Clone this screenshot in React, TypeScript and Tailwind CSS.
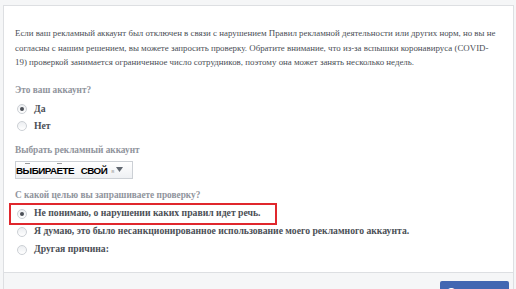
import React from 'react';

function Radio({ checked }: { checked?: boolean }) {
  return (
    <span className="flex h-[10px] w-[10px] shrink-0 items-center justify-center rounded-full border border-[#ccd0d5] bg-gradient-to-b from-[#eceef1] to-white">
      {checked && <span className="h-[4px] w-[4px] rounded-full bg-[#4b4f56]" />}
    </span>
  );
}

function Option({ label, checked, tall }: { label: string; checked?: boolean; tall?: boolean }) {
  return (
    <div className={`flex items-center gap-[7px] pl-[1px] ${tall ? 'h-[18px]' : 'h-[17px]'}`}>
      <Radio checked={checked} />
      <span className="text-[9.7px] font-bold whitespace-nowrap text-[#4b4f56]">{label}</span>
    </div>
  );
}

export default function App() {
  return (
    <div className="flex h-[289px] w-[516px] flex-col overflow-hidden bg-[#f5f6f7] pt-[5px] font-[family-name:Liberation_Serif]">
      <div className="ml-[3px] mr-[2px] flex-1 border-x border-t border-[#dddfe2] bg-white pl-[11px] pt-[20px]">
        <p className="text-[8.9px] leading-[14.5px] whitespace-nowrap text-[#4b4f56]">
          Если ваш рекламный аккаунт был отключен в связи с нарушением Правил рекламной деятельности или других норм, но вы не
          <br />
          согласны с нашим решением, вы можете запросить проверку. Обратите внимание, что из-за вспышки коронавируса (COVID-
          <br />
          19) проверкой занимается ограниченное число сотрудников, поэтому она может занять несколько недель.
        </p>

        <div className="mt-[13px] text-[9.3px] leading-[14px] font-bold text-[#90949c]">Это ваш аккаунт?</div>
        <div className="mt-[4px] flex flex-col pl-[1px]">
          <Option label="Да" checked />
          <Option label="Нет" />
        </div>

        <div className="mt-[8px] text-[9.3px] leading-[14px] font-bold text-[#90949c]">Выбрать рекламный аккаунт</div>
        <div className="relative mt-[4px] flex h-[18px] w-[118px] items-center overflow-hidden border border-[#ccd0d5] bg-gradient-to-b from-white to-[#eef0f3] pt-[3px] font-[family-name:Liberation_Sans]">
          <span className="absolute left-[9px] top-[1px] h-px w-[5px] bg-[#999]" />
          <span className="absolute left-[41px] top-[1px] h-px w-[5px] bg-[#999]" />
          <span className="text-[9.8px] leading-[12px] font-bold tracking-[-0.5px] whitespace-nowrap text-black">
            ВЫБИРАЕТЕ&nbsp;&nbsp;&nbsp;СВОЙ
          </span>
          <span className="ml-[4px] text-[6px] text-[#aaa]">в</span>
          <svg className="ml-[2px] -mt-[3px]" width="7" height="5" viewBox="0 0 7 5">
            <path d="M0 0h7L3.5 5z" fill="#606770" />
          </svg>
        </div>

        <div className="mt-[9px] text-[9.3px] leading-[14px] font-bold text-[#90949c]">С какой целью вы запрашиваете проверку?</div>
        <div className="relative mt-[3px] flex flex-col pl-[1px]">
          <div className="absolute -left-[6px] -top-[2px] h-[22px] w-[268px] border-[2.5px] border-[#e0272d]" />
          <Option label="Не понимаю, о нарушении каких правил идет речь." checked tall />
          <Option label="Я думаю, это было несанкционированное использование моего рекламного аккаунта." tall />
          <Option label="Другая причина:" tall />
        </div>
      </div>
      <div className="ml-[3px] mr-[2px] flex h-[17px] shrink-0 justify-end border-x border-t border-[#dddfe2] bg-[#f5f6f7] pr-[4px] pt-[8px]">
        <div className="h-[20px] w-[69px] rounded-[2px] bg-[#4267b2] pl-[7px] pt-[3px] font-[family-name:Liberation_Sans] text-[11px] font-bold text-white">
          Отправить
        </div>
      </div>
    </div>
  );
}
